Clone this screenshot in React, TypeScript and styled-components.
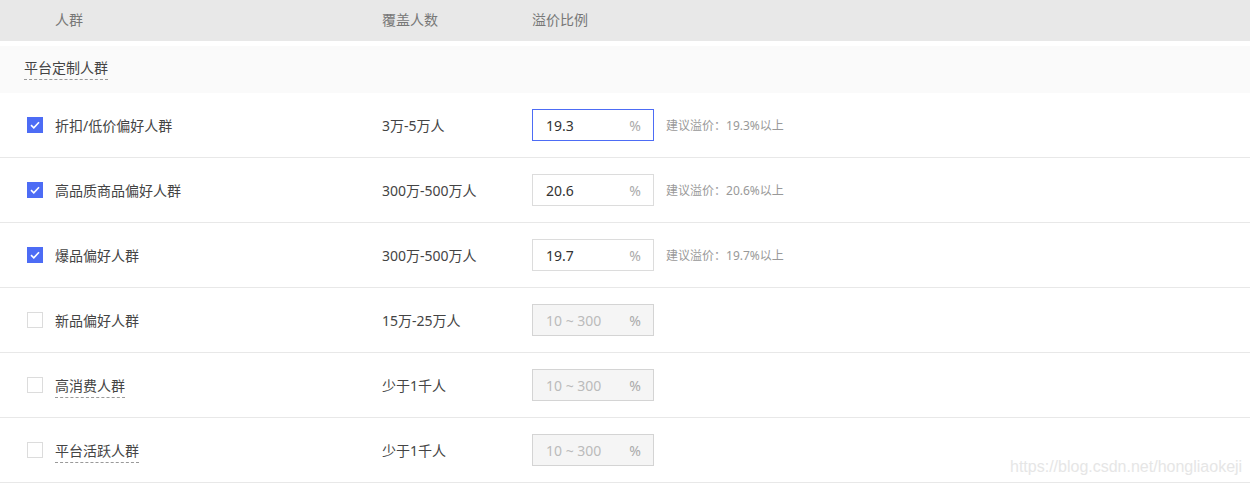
import React from "react";
import styled, { createGlobalStyle } from "styled-components";

const GlobalStyle = createGlobalStyle`
  body {
    margin: 0;
    background: #fff;
    font-family: "Noto Sans", "Noto Sans CJK SC", sans-serif;
    font-size: 14px;
    color: #333;
  }
`;

type Crowd = {
  name: string;
  count: string;
  checked: boolean;
  value?: string;
  focused?: boolean;
  tip?: boolean;
};

const crowds: Crowd[] = [
  { name: "折扣/低价偏好人群", count: "3万-5万人", checked: true, value: "19.3", focused: true },
  { name: "高品质商品偏好人群", count: "300万-500万人", checked: true, value: "20.6" },
  { name: "爆品偏好人群", count: "300万-500万人", checked: true, value: "19.7" },
  { name: "新品偏好人群", count: "15万-25万人", checked: false },
  { name: "高消费人群", count: "少于1千人", checked: false, tip: true },
  { name: "平台活跃人群", count: "少于1千人", checked: false, tip: true },
];

export default function App() {
  return (
    <Page>
      <GlobalStyle />
      <HeaderRow>
        <span />
        <HeadCell>人群</HeadCell>
        <HeadCell>覆盖人数</HeadCell>
        <HeadCell>溢价比例</HeadCell>
      </HeaderRow>
      <GroupRow>
        <Dashed>平台定制人群</Dashed>
      </GroupRow>
      {crowds.map((c) => (
        <Row key={c.name}>
          <CheckCell>
            <Check $checked={c.checked}>
              {c.checked && (
                <svg width="10" height="8" viewBox="0 0 10 8">
                  <path d="M1 4.2 L3.8 6.8 L9 1.2" fill="none" stroke="#fff" strokeWidth="1.6" />
                </svg>
              )}
            </Check>
          </CheckCell>
          <Cell>{c.tip ? <Dashed>{c.name}</Dashed> : c.name}</Cell>
          <Cell>{c.count}</Cell>
          <PriceCell>
            <Input $disabled={!c.checked} $focused={!!c.focused}>
              <InputText $placeholder={!c.checked}>{c.value ?? "10 ~ 300"}</InputText>
              <Unit>%</Unit>
            </Input>
            {c.checked && <Hint>建议溢价：{c.value}%以上</Hint>}
          </PriceCell>
        </Row>
      ))}
      <Watermark>https://blog.csdn.net/hongliaokeji</Watermark>
    </Page>
  );
}

const Page = styled.div`
  position: relative;
  width: 1250px;
  height: 489px;
  overflow: hidden;
`;

const grid = `
  display: grid;
  grid-template-columns: 55px 327px 150px 1fr;
  align-items: center;
`;

const HeaderRow = styled.div`
  ${grid}
  height: 41px;
  background: #e8e8e8;
  margin-bottom: 5px;
`;

const HeadCell = styled.div`
  color: #777;
  font-size: 14px;
  padding-bottom: 3px;
`;

const GroupRow = styled.div`
  height: 47px;
  background: #fafafa;
  display: flex;
  align-items: center;
  padding-left: 24px;
  font-size: 14px;
  color: #444;
`;

const Dashed = styled.span`
  border-bottom: 1px dashed #999;
  padding-bottom: 2px;
  line-height: 18px;
`;

const Row = styled.div`
  ${grid}
  height: 64px;
  border-bottom: 1px solid #e8e8e8;
`;

const CheckCell = styled.div`
  padding-left: 27px;
  display: flex;
  align-items: center;
`;

const Check = styled.span<{ $checked: boolean }>`
  box-sizing: border-box;
  width: 16px;
  height: 16px;
  display: flex;
  align-items: center;
  justify-content: center;
  background: ${(p) => (p.$checked ? "#4d6cf5" : "#fff")};
  border: 1px solid ${(p) => (p.$checked ? "#4d6cf5" : "#dcdcdc")};
`;

const Cell = styled.div`
  font-size: 14px;
  color: #444;
`;

const PriceCell = styled.div`
  display: flex;
  align-items: center;
  gap: 12px;
`;

const Input = styled.div<{ $disabled: boolean; $focused: boolean }>`
  box-sizing: border-box;
  width: 122px;
  height: 32px;
  display: flex;
  align-items: center;
  justify-content: space-between;
  padding: 0 12px 0 13px;
  background: ${(p) => (p.$disabled ? "#f5f5f5" : "#fff")};
  border: 1px solid ${(p) => (p.$focused ? "#4d6cf5" : p.$disabled ? "#d4d4d4" : "#dcdcdc")};
`;

const InputText = styled.span<{ $placeholder: boolean }>`
  font-size: 14px;
  color: ${(p) => (p.$placeholder ? "#bbb" : "#333")};
`;

const Unit = styled.span`
  font-size: 14px;
  color: #aaa;
`;

const Hint = styled.span`
  font-size: 12px;
  color: #999;
`;

const Watermark = styled.div`
  position: absolute;
  left: 1010px;
  top: 458px;
  font-family: "Liberation Sans", Arial, sans-serif;
  font-size: 16px;
  color: #e6e6e6;
`;
